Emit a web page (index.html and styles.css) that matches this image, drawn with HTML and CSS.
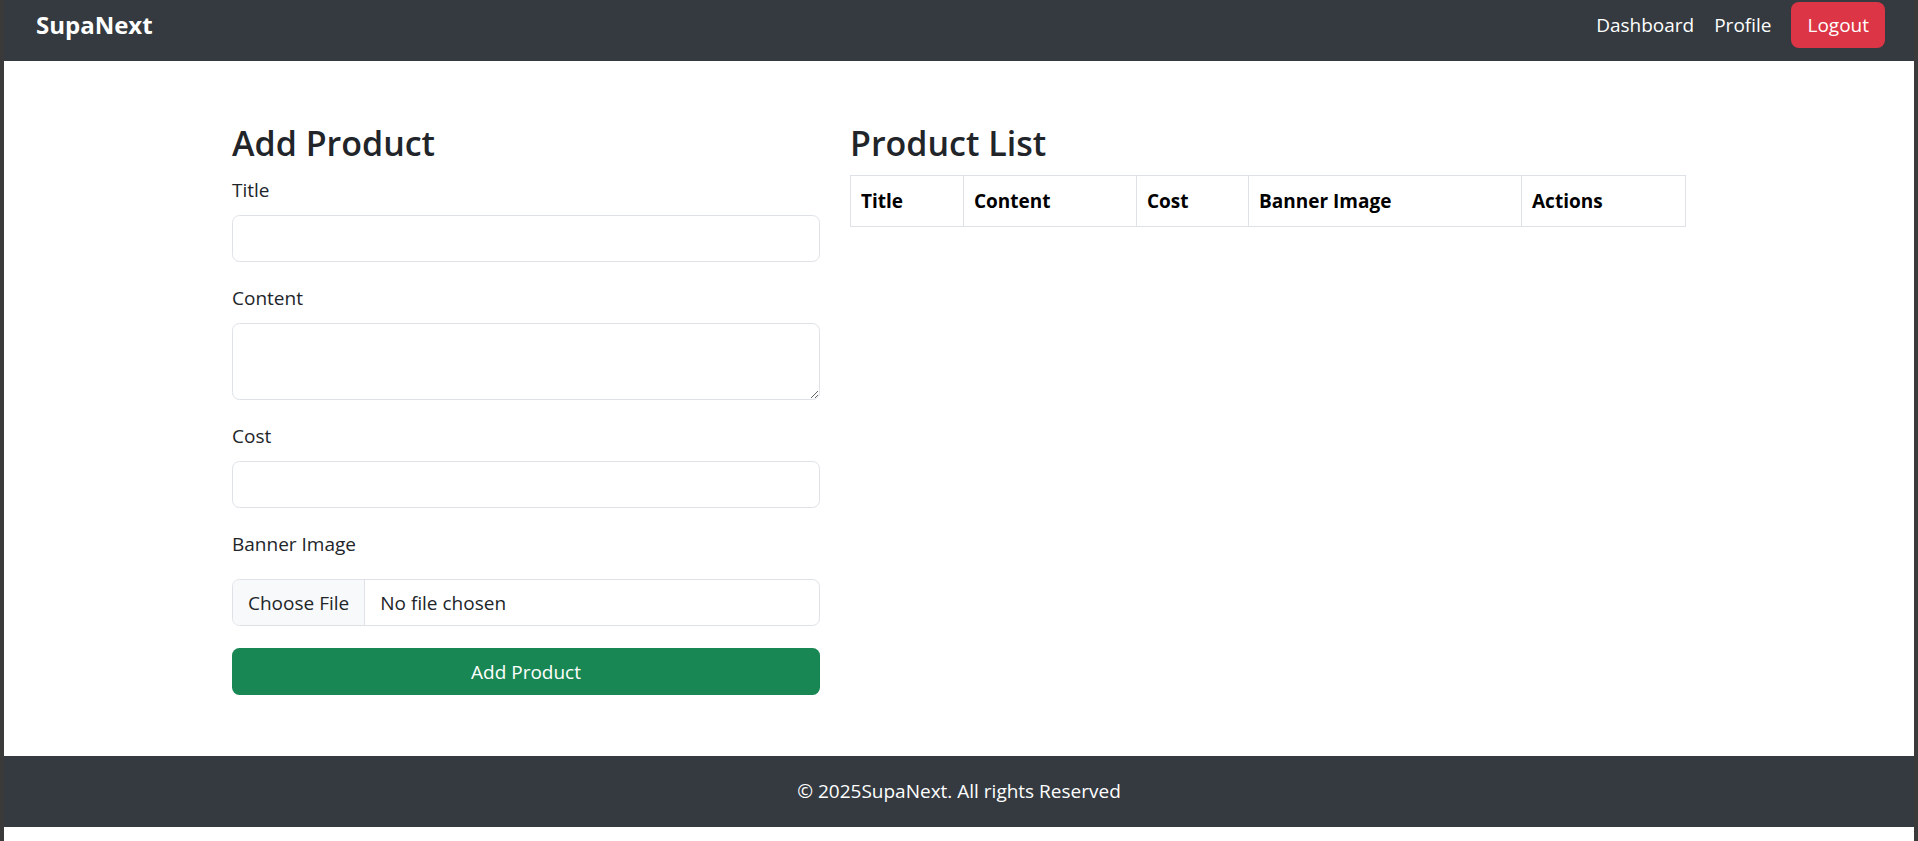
FILE: index.html
```html
<!DOCTYPE html>
<html lang="en">
<head>
<meta charset="utf-8">
<title>SupaNext</title>
<link rel="stylesheet" href="styles.css">
</head>
<body>
<nav class="navbar">
  <a class="brand" href="#">SupaNext</a>
  <div class="nav-right">
    <a class="nav-link" href="#">Dashboard</a>
    <a class="nav-link" href="#">Profile</a>
    <button class="btn btn-logout" type="button">Logout</button>
  </div>
</nav>
<main class="main">
  <div class="container">
    <section class="col-form">
      <h2 class="heading">Add Product</h2>
      <form class="product-form">
        <div class="field">
          <label class="form-label" for="title">Title</label>
          <input class="form-control" id="title" type="text">
        </div>
        <div class="field">
          <label class="form-label" for="content">Content</label>
          <textarea class="form-control textarea" id="content" rows="2"></textarea>
        </div>
        <div class="field">
          <label class="form-label" for="cost">Cost</label>
          <input class="form-control" id="cost" type="text">
        </div>
        <div class="field field-file">
          <span class="form-label file-label">Banner Image</span>
          <label class="file-field">
            <span class="file-btn">Choose File</span>
            <span class="file-name">No file chosen</span>
            <input class="file-hidden" type="file">
          </label>
        </div>
        <button class="btn btn-submit" type="button">Add Product</button>
      </form>
    </section>
    <section class="col-list">
      <h2 class="heading">Product List</h2>
      <table class="table">
        <colgroup>
          <col class="c-title">
          <col class="c-content">
          <col class="c-cost">
          <col class="c-banner">
          <col class="c-actions">
        </colgroup>
        <thead>
          <tr>
            <th>Title</th>
            <th>Content</th>
            <th>Cost</th>
            <th>Banner Image</th>
            <th>Actions</th>
          </tr>
        </thead>
        <tbody></tbody>
      </table>
    </section>
  </div>
</main>
<footer class="footer">© 2025SupaNext. All rights Reserved</footer>
</body>
</html>
```

FILE: styles.css
```css
html {
  margin: 0;
  height: 100%;
}

body {
  margin: 0;
  min-height: 100%;
  box-sizing: border-box;
  background: #ffffff;
  border-left: 4px solid #3a3a3a;
  border-right: 4px solid #3a3a3a;
  font-family: "Open Sans", "Noto Sans", sans-serif;
  font-size: 19px;
  line-height: 30px;
  color: #212529;
}

/* navbar */
.navbar {
  margin: 0 -4px;
  height: 61px;
  box-sizing: border-box;
  padding: 0 33px 11px 36px;
  background: #343a40;
  display: flex;
  align-items: center;
  justify-content: space-between;
}

.brand {
  color: #ffffff;
  text-decoration: none;
  font-weight: 700;
  font-size: 24px;
  line-height: 30px;
}

.nav-right {
  display: flex;
  align-items: center;
}

.nav-link {
  color: #ffffff;
  text-decoration: none;
  padding: 0 10px;
  font-size: 19px;
  line-height: 30px;
}

.btn {
  font-family: inherit;
  font-size: 19px;
  line-height: 30px;
  border: 0;
  color: #ffffff;
  cursor: pointer;
}

.btn-logout {
  height: 46px;
  padding: 0 16px;
  margin-left: 10px;
  background: #dc3545;
  border-radius: 8px;
}

/* main */
.main {
  height: 695px;
  box-sizing: border-box;
  padding-top: 56px;
}

.container {
  width: 1454px;
  margin: 0 auto;
  display: grid;
  grid-template-columns: 588px 1fr;
  column-gap: 30px;
}

.heading {
  margin: 0 0 6px;
  font-size: 34px;
  font-weight: 600;
  line-height: 52px;
  color: #212529;
}

.field {
  margin-bottom: 21px;
}

.form-label {
  display: block;
  margin-bottom: 10px;
  line-height: 30px;
}

.form-control {
  display: block;
  width: 100%;
  box-sizing: border-box;
  height: 47px;
  padding: 7px 15px;
  border: 1px solid #dee2e6;
  border-radius: 7.5px;
  background: #ffffff;
  font-family: inherit;
  font-size: 19px;
  line-height: 30px;
  color: #212529;
  outline: none;
}

.textarea {
  height: 77px;
  resize: vertical;
}

.file-label {
  margin-bottom: 20px;
}

.file-field {
  display: flex;
  height: 47px;
  box-sizing: border-box;
  border: 1px solid #dee2e6;
  border-radius: 7.5px;
  overflow: hidden;
  cursor: pointer;
}

.file-btn {
  display: flex;
  align-items: center;
  padding: 0 15px;
  background: #f8f9fa;
  border-right: 1px solid #dee2e6;
}

.file-name {
  display: flex;
  align-items: center;
  padding-left: 15px;
}

.file-hidden {
  display: none;
}

.btn-submit {
  display: block;
  width: 100%;
  height: 47px;
  margin-top: 22px;
  background: #198754;
  border-radius: 7.5px;
}

.field-file {
  margin-bottom: 0;
}

/* table */
.table {
  width: 100%;
  border-collapse: collapse;
  table-layout: fixed;
}

.c-title { width: 113px; }
.c-content { width: 173px; }
.c-cost { width: 112px; }
.c-banner { width: 273px; }

.table th {
  border: 1px solid #dee2e6;
  padding: 10px;
  text-align: left;
  font-weight: 700;
  font-size: 19px;
  line-height: 30px;
  color: #000000;
}

/* footer */
.footer {
  background: #343a40;
  color: #ffffff;
  text-align: center;
  padding: 20px 0 21px;
  font-size: 19px;
  line-height: 30px;
}
```
